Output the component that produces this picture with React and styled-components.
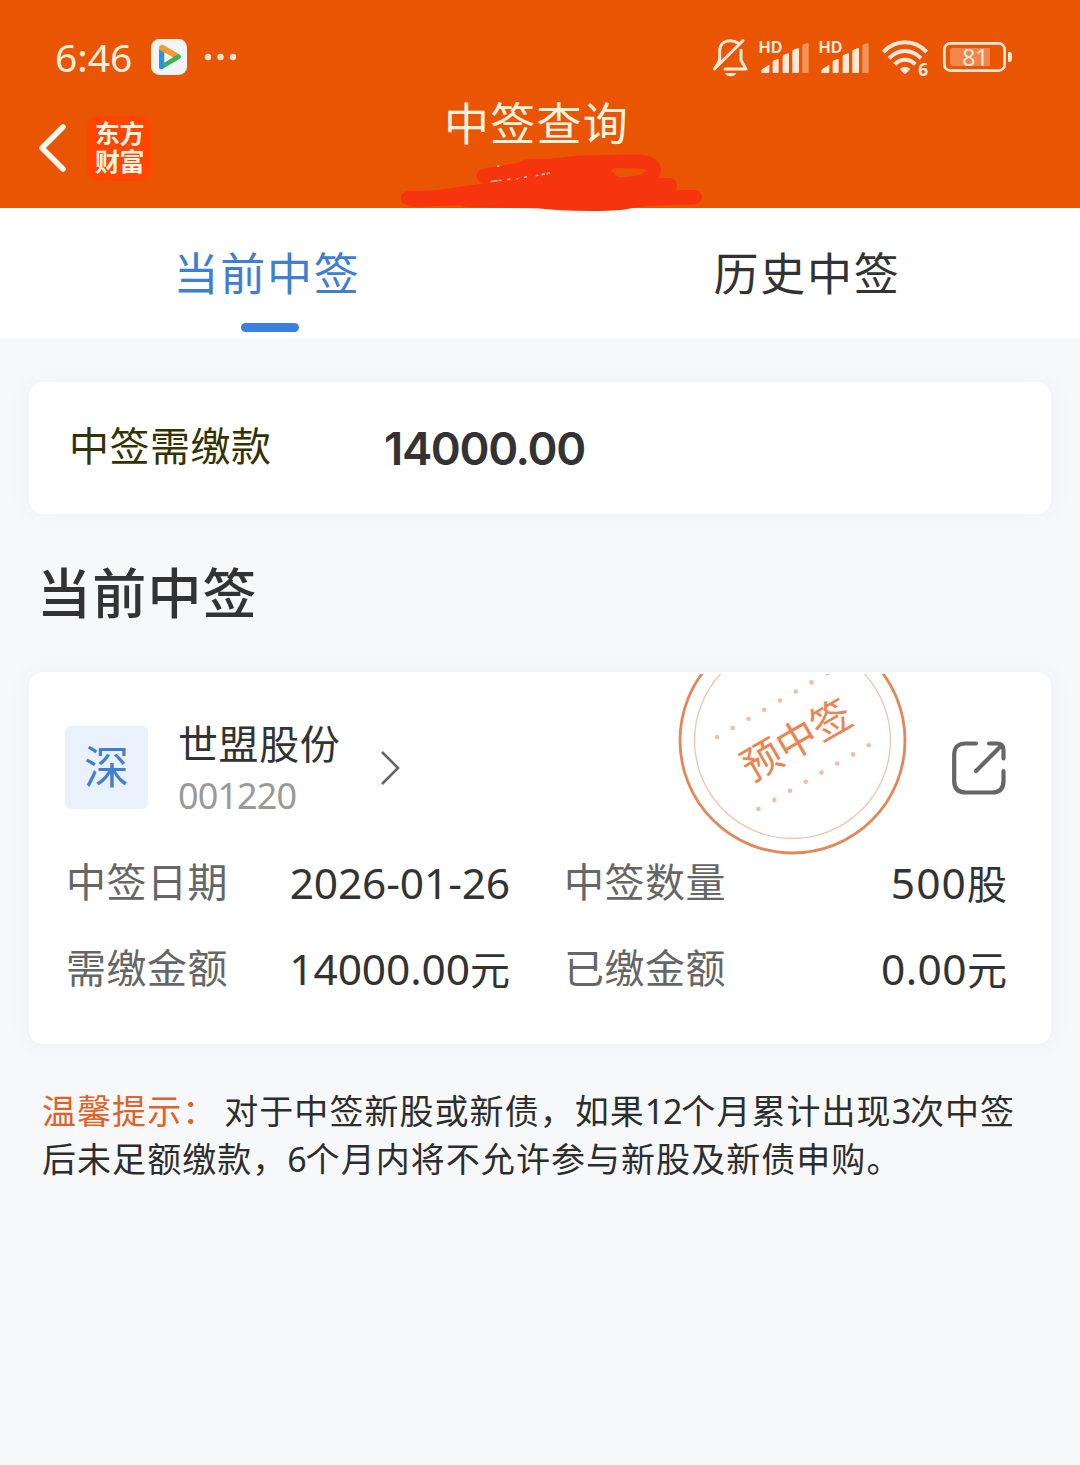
import React, { useState } from 'react'
import styled, { createGlobalStyle } from 'styled-components';

const numberFont = '"Noto Sans", "Noto Sans CJK SC", sans-serif'

const GlobalStyle = createGlobalStyle`
    * {
        box-sizing: border-box;
    }
    body {
        margin: 0;
        background: #f7f8fa;
        font-family: Inter, "Noto Sans CJK SC", sans-serif;
        color: #333;
    }
`

const Page = styled.div`
    width: 1080px;
    min-height: 1465px;
    background: #f7f8fa;
`

const Header = styled.header`
    position: relative;
    height: 208px;
    background: #ea5504;
    color: #fff3e0;
`

const StatusBar = styled.div`
    display: flex;
    align-items: center;
    height: 94px;
    padding: 20px 67px 0 55px;
`

const Clock = styled.div`
    width: 96px;
    font-family: ${numberFont};
    font-size: 39px;
    line-height: 40px;
    color: #ffeedd;
`

const StatusIcons = styled.div`
    display: flex;
    margin-left: auto;
    color: #ffe9d6;
`

const StatusIcon = styled.svg`
    width: ${props => props.$width}px;
    height: 40px;
    margin-left: ${props => props.$gap || 0}px;
    overflow: visible;
`

const Dots = styled.svg`
    width: 34px;
    height: 8px;
    margin-left: 17px;
`

const NavBar = styled.div`
    display: grid;
    grid-template-columns: 300px 1fr 300px;
    height: 114px;
`

const NavLeft = styled.div`
    display: flex;
    align-items: center;
    padding: 0 0 6px 38px;
`

const Logo = styled.div`
    width: 64px;
    height: 65px;
    margin-left: 20px;
    padding: 4px 0 0 8px;
    border-radius: 12px;
    background: #ff4500;
    font-size: 25px;
    font-weight: 700;
    line-height: 28px;
    letter-spacing: -0.5px;
`

const Title = styled.h1`
    margin: 0;
    padding-top: 6px;
    font-size: 45px;
    font-weight: 400;
    line-height: 50px;
    letter-spacing: 1.2px;
    text-align: center;
    text-indent: -7px;
`

const Scribble = styled.svg`
    position: absolute;
    left: 390px;
    top: 150px;
    width: 330px;
    height: 65px;
`

const Tabs = styled.div`
    display: grid;
    grid-template-columns: 1fr 1fr;
    height: 130px;
    background: #fff;
`

const Tab = styled.div`
    display: flex;
    flex-direction: column;
    align-items: center;
    padding-top: 37px;
    font-size: 45px;
    line-height: 60px;
    letter-spacing: 1.8px;
    color: ${props => (props.$active ? '#3f7fd0' : '#333')};

    &::after {
        content: "";
        width: 58px;
        height: 9px;
        margin-top: 18px;
        border-radius: 5px;
        background: ${props => (props.$active ? '#3a80e0' : 'transparent')};
    }
`

const TabLabel = styled.span`
    margin-right: 6px;
`

const Card = styled.section`
    margin: 0 29px;
    border-radius: 14px;
    background: #fff;
    box-shadow: 0 0 24px rgba(60, 80, 110, 0.05);
`

const PayCard = styled(Card)`
    display: flex;
    height: 132px;
    margin-top: 44px;
    padding: 34px 40px;
`

const PayLabel = styled.div`
    width: 315px;
    padding-top: 1px;
    font-size: 40px;
    line-height: 60px;
    letter-spacing: 0.5px;
    color: #333300;
`

const PayAmount = styled.div`
    font-size: 45.5px;
    font-weight: 600;
    line-height: 65px;
    letter-spacing: -1.35px;
`

const Heading = styled.h2`
    margin: 45px 0 42px 37px;
    font-size: 54px;
    font-weight: 500;
    line-height: 71px;
    letter-spacing: 1.2px;
`

const StockCard = styled(Card)`
    position: relative;
    height: 372px;
    padding: 47px 44px 0 36px;
`

const StockHead = styled.div`
    display: flex;
    align-items: center;
    height: 97px;
`

const Market = styled.div`
    width: 83px;
    height: 83px;
    border-radius: 6px;
    background: #e9f2fc;
    font-size: 45px;
    line-height: 83px;
    text-align: center;
    color: #3f7fd0;
`

const StockName = styled.div`
    width: 202px;
    margin-left: 30px;
    padding-top: 2px;
    font-size: 40px;
    line-height: 54px;
    letter-spacing: 0.6px;
`

const StockCode = styled.div`
    font-family: ${numberFont};
    font-size: 36px;
    line-height: 48px;
    letter-spacing: -0.9px;
    color: #999;
`

const Chevron = styled.svg`
    width: 20px;
    height: 36px;
`

const Share = styled.svg`
    width: 54px;
    height: 54px;
    margin: 1px 1px 0 auto;
`

const Stamp = styled.svg`
    position: absolute;
    left: 649px;
    top: 2px;
    width: 230px;
    height: 182px;
`

const StampText = styled.text`
    font-size: 40px;
    fill: #ec8350;
    text-anchor: middle;
`

const Details = styled.dl`
    display: grid;
    grid-template-columns: 190px 255px 190px 1fr;
    grid-auto-rows: 60px;
    row-gap: 26px;
    margin: 37px 0 0;
    font-size: 40px;
    line-height: 60px;
`

const Term = styled.dt`
    padding-left: ${props => (props.$second ? 54 : 1)}px;
    letter-spacing: 0.5px;
    white-space: nowrap;
    color: #666;
`

const Value = styled.dd`
    margin: 0;
    font-family: ${numberFont};
    font-size: 42.5px;
    line-height: 60px;
    letter-spacing: ${props => props.$spacing}px;
    text-align: right;
    white-space: nowrap;
`

const Unit = styled.span`
    font-size: 40px;
    letter-spacing: 0;
`

const Tip = styled.p`
    margin: 44px 0 0 42px;
    font-size: 34px;
    line-height: 48px;
    letter-spacing: 1.05px;
    white-space: nowrap;
    color: #2d2d2d;
`

const TipLabel = styled.span`
    margin-right: 7px;
    color: #e0622a;
`

const TipNumber = styled.span`
    font-family: ${numberFont};
    line-height: 1;
    letter-spacing: -1.2px;
`

const details = [
    { term: '中签日期', value: '2026-01-26', spacing: -0.15 },
    { term: '中签数量', value: '500', unit: '股', spacing: 1.1 },
    { term: '需缴金额', value: '14000.00', unit: '元', spacing: -0.1 },
    { term: '已缴金额', value: '0.00', unit: '元', spacing: 0.4 },
]

const stampDots = [0, 1, 2, 3, 4, 5, 6, 7]

function VideoIcon() {
    return (
        <svg width="36" height="36" viewBox="0 0 108 108">
            <rect width="108" height="108" rx="25" fill="#f3f4f6" />
            <path d="M24 26q2-12 14-7l46 26-11 16-33-20v11L24 38z" fill="#f29a32" />
            <path d="M84 45q12 9 0 16L38 88q-6 3-11 1l14-19 32-20z" fill="#35b558" />
            <path d="M24 32l16 9v30l-2 17q-10 6-14-2z" fill="#2794e8" />
            <path d="M41 41l25 14-25 15z" fill="#f3f4f6" />
        </svg>
    )
}

function BellOffIcon() {
    return (
        <StatusIcon $width={37} viewBox="36 36 111 120" fill="none" stroke="currentColor" strokeWidth="9" strokeLinecap="round" strokeLinejoin="round">
            <path d="M59 108V77c0-19 13-30 32-30 10 0 17 3 22 7" />
            <path d="M123 76v30l15 26H75" />
            <path d="M43 132L129 47" />
            <path d="M59 106L45 130" />
            <path d="M74 144h35q-5 10-17 10t-18-10z" fill="currentColor" stroke="none" />
        </StatusIcon>
    )
}

function SignalIcon({ gap }) {
    return (
        <StatusIcon $width={52} $gap={gap} viewBox="174 36 156 120" fill="currentColor">
            <text x="176" y="84" fontSize="47" fontWeight="700" fontFamily="Inter" textLength="71">HD</text>
            <path d="M184 144v-8q2-4 9-8l15-9v21q0 4-4 4z" />
            <path d="M218 111q0-4 4-5l11-4q3-1 3 3v35q0 4-4 4h-14z" />
            <path d="M248 94q0-4 4-5l12-4q3 0 3 3v52q0 4-4 4h-15z" />
            <path d="M277 79q0-4 4-5l13-5q3 0 3 3v68q0 4-4 4h-16z" />
            <path d="M307 64q0-4 4-6l12-4q3 0 3 3v83q0 4-4 4h-15z" opacity="0.42" />
        </StatusIcon>
    )
}

function WifiIcon() {
    return (
        <StatusIcon $width={49} $gap={11} viewBox="543 36 147 120" fill="none" stroke="currentColor" strokeWidth="12">
            <path d="M550 81Q578 52 615 52T680 81" />
            <path d="M567 100Q588 78 615 78T663 100" />
            <path d="M584 118Q597 104 615 104T646 118" />
            <path d="M599 132q16-14 32 0l-12 13q-4 4-8 0z" fill="currentColor" stroke="none" />
            <text x="655" y="152" fontSize="52" fontWeight="700" fontFamily="Noto Sans" fill="currentColor" stroke="none">6</text>
        </StatusIcon>
    )
}

function BatteryIcon() {
    return (
        <StatusIcon $width={71} $gap={12} viewBox="726 36 213 120">
            <rect x="733" y="55" width="181" height="82" rx="18" fill="none" stroke="currentColor" strokeWidth="8" />
            <path d="M757 69h113v54H757q-7 0-7-7V76q0-7 7-7z" fill="#f2854c" />
            <path d="M924 81h5q7 0 7 8v14q0 8-7 8h-5z" fill="currentColor" />
            <text x="826" y="122" fontSize="69" fontWeight="400" fontFamily="Noto Sans" textAnchor="middle" fill="currentColor">81</text>
        </StatusIcon>
    )
}

function StampMark() {
    return (
        <Stamp viewBox="678 674 230 182">
            <circle cx="792.500" cy="740.500" r="112.500" fill="none" stroke="#e38756" strokeWidth="2.800" />
            <circle cx="792.500" cy="740.500" r="98" fill="none" stroke="#efc3ac" strokeWidth="1.300" />
            {stampDots.map((i) => (
                <React.Fragment key={i}>
                    <circle cx={717 + i * 15.75} cy={737 - i * 9.1} r="2.300" fill="#eebfa6" />
                    <circle cx={758.5 + i * 15.75} cy={809 - i * 9.1} r="2.300" fill="#eebfa6" />
                </React.Fragment>
            ))}
            <StampText transform="translate(796 739) rotate(-30)" y="15.500">预中签</StampText>
        </Stamp>
    )
}

function App() {
    const [tab, setTab] = useState('current')

    return (
        <Page>
            <GlobalStyle />
            <Header>
                <StatusBar>
                    <Clock>6:46</Clock>
                    <VideoIcon />
                    <Dots viewBox="0 0 34 8" fill="#ffe6d0">
                        <circle cx="4" cy="4" r="3.200" />
                        <circle cx="16.500" cy="4" r="3.200" />
                        <circle cx="29" cy="4" r="3.200" />
                    </Dots>
                    <StatusIcons>
                        <BellOffIcon />
                        <SignalIcon gap={9} />
                        <SignalIcon gap={8} />
                        <WifiIcon />
                        <BatteryIcon />
                    </StatusIcons>
                </StatusBar>
                <NavBar>
                    <NavLeft>
                        <svg width="29" height="50" viewBox="0 0 29 50" fill="none" stroke="#fff8ee" strokeWidth="5.500" strokeLinecap="round" strokeLinejoin="round">
                            <path d="M25 4L4 25l21 21" />
                        </svg>
                        <Logo>东方<br />财富</Logo>
                    </NavLeft>
                    <Title>中签查询</Title>
                </NavBar>
                <Scribble viewBox="0 180 990 195">
                    <path
                        fill="#f6350f"
                        fillRule="evenodd"
                        d="M280 236L390 217Q405 205 430 207L480 206Q560 194 640 195L740 193Q812 198 813 240Q812 256 804 264L840 264Q861 268 861 288Q861 296 857 300L915 300Q936 302 936 321Q934 342 912 343L780 347Q730 352 700 359Q620 366 500 360L440 355L240 352Q222 352 215 346L75 350Q32 346 32 325Q34 304 58 303L140 301L302 277L285 279Q261 277 260 258Q261 240 280 236zM662 245Q664 236 685 234L750 236Q768 238 766 244Q755 257 710 261L683 262Q674 247 662 245z"
                    />
                    <path d="M302 275l20-3M326 272l8-1M351 269l10-2M380 267l5-1M402 262l9-2M437 258l8-3M455 254l10-2M470 251l10-2M321 229l7-1" stroke="#ffdccb" strokeWidth="4" />
                </Scribble>
            </Header>
            <Tabs>
                <Tab $active={tab === 'current'} onClick={() => setTab('current')}>
                    <TabLabel>当前中签</TabLabel>
                </Tab>
                <Tab $active={tab === 'history'} onClick={() => setTab('history')}>
                    <TabLabel>历史中签</TabLabel>
                </Tab>
            </Tabs>
            <PayCard>
                <PayLabel>中签需缴款</PayLabel>
                <PayAmount>14000.00</PayAmount>
            </PayCard>
            <Heading>当前中签</Heading>
            <StockCard>
                <StampMark />
                <StockHead>
                    <Market>深</Market>
                    <StockName>
                        世盟股份
                        <StockCode>001220</StockCode>
                    </StockName>
                    <Chevron viewBox="0 0 20 36" fill="none" stroke="#666" strokeWidth="2.600">
                        <path d="M2 2l16 16L2 34" />
                    </Chevron>
                    <Share viewBox="0 0 54 54" fill="none" stroke="#666" strokeWidth="4.200" strokeLinecap="round">
                        <path d="M24 2.500H13.500Q2.200 2.500 2.200 14v26Q2.200 51.500 14 51.500h26Q51.500 51.500 51.500 40V30" />
                        <path d="M37 2.500h8q6.500 0 6.500 6.500v8.500M49 5L24 30" />
                    </Share>
                </StockHead>
                <Details>
                    {details.map((item, index) => (
                        <React.Fragment key={item.term}>
                            <Term $second={index % 2 === 1}>{item.term}</Term>
                            <Value $spacing={item.spacing}>
                                {item.value}
                                {item.unit && <Unit>{item.unit}</Unit>}
                            </Value>
                        </React.Fragment>
                    ))}
                </Details>
            </StockCard>
            <Tip>
                <TipLabel>温馨提示：</TipLabel>对于中签新股或新债，如果<TipNumber>12</TipNumber>个月累计出现<TipNumber>3</TipNumber>次中签<br />
                后未足额缴款，<TipNumber>6</TipNumber>个月内将不允许参与新股及新债申购。
            </Tip>
        </Page>
    )
}

export default App
